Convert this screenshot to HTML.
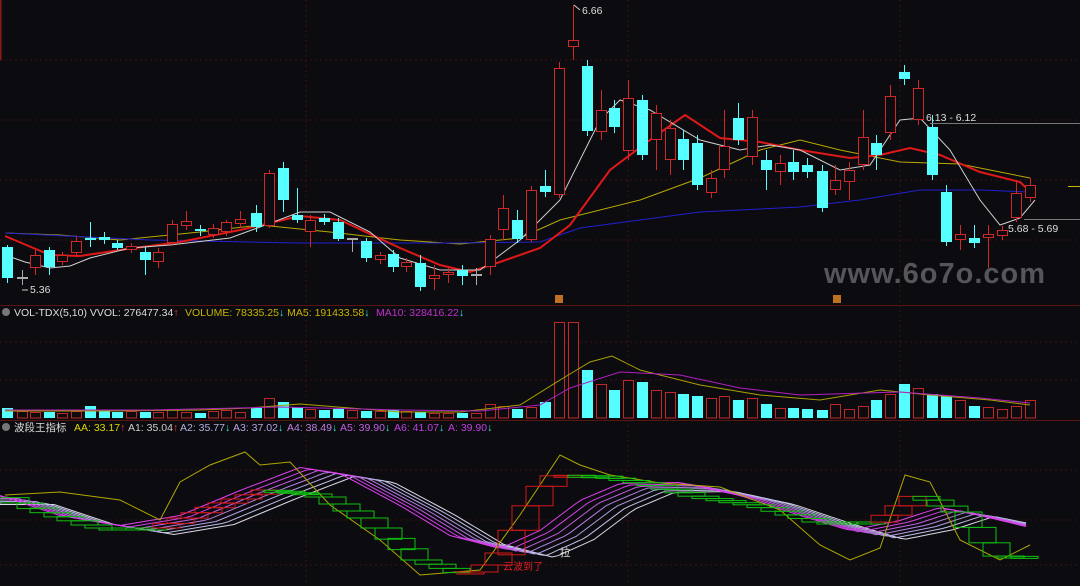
<!DOCTYPE html>
<html><head><meta charset="utf-8"><style>
html,body{margin:0;padding:0;background:#0c0c10;width:1080px;height:586px;overflow:hidden}
svg{display:block}
text{font-family:"Liberation Sans","Noto Sans CJK SC",sans-serif}
</style></head><body>
<svg id="s" width="1080" height="586" xmlns="http://www.w3.org/2000/svg">
<rect width="1080" height="586" fill="#0c0c10"/>
<g stroke="#3a1010" stroke-dasharray="2,3" stroke-width="1">
<line x1="0" y1="60" x2="1080" y2="60"/><line x1="0" y1="120" x2="1080" y2="120"/><line x1="0" y1="180" x2="1080" y2="180"/><line x1="0" y1="240" x2="1080" y2="240"/>
<line x1="0" y1="342" x2="1080" y2="342"/><line x1="0" y1="380" x2="1080" y2="380"/>
<line x1="0" y1="470" x2="1080" y2="470"/><line x1="0" y1="520" x2="1080" y2="520"/><line x1="0" y1="565" x2="1080" y2="565"/>
<line x1="306" y1="0" x2="306" y2="586"/><line x1="628" y1="0" x2="628" y2="586"/><line x1="900" y1="0" x2="900" y2="586"/>
</g>
<line x1="0" y1="305.5" x2="1080" y2="305.5" stroke="#5a1414"/>
<line x1="0" y1="420.5" x2="1080" y2="420.5" stroke="#5a1414"/>
<line x1="0.5" y1="0" x2="0.5" y2="60" stroke="#8a1a1a" stroke-width="2"/>
<g id="c"></g>
<text x="824" y="283" font-size="29" fill="#55555a" font-weight="bold" letter-spacing="1">www.6o7o.com</text>
<g font-size="10.5">
<circle cx="6" cy="312" r="4" fill="#777"/>
<text x="14" y="316" fill="#ddd">VOL-TDX(5,10) VVOL: 276477.34<tspan fill="#f33">↑</tspan></text>
<text x="185" y="316" fill="#c8b400">VOLUME: 78335.25<tspan fill="#3ee">↓</tspan> MA5: 191433.58<tspan fill="#3ee">↓</tspan></text>
<text x="376" y="316" fill="#c030d0">MA10: 328416.22<tspan fill="#3ee">↓</tspan></text>
<circle cx="6" cy="427" r="4" fill="#777"/>
<text x="14" y="431" fill="#ddd">波段王指标</text>
<text x="74" y="431" fill="#d8d800">AA: 33.17<tspan fill="#f33">↑</tspan></text>
<text x="128" y="431" fill="#ccc">A1: 35.04<tspan fill="#f33">↑</tspan></text>
<text x="180" y="431" fill="#b0b0e0">A2: 35.77<tspan fill="#3ee">↓</tspan></text>
<text x="233" y="431" fill="#b8a0e0">A3: 37.02<tspan fill="#3ee">↓</tspan></text>
<text x="287" y="431" fill="#c080e0">A4: 38.49<tspan fill="#3ee">↓</tspan></text>
<text x="340" y="431" fill="#c060e0">A5: 39.90<tspan fill="#3ee">↓</tspan></text>
<text x="394" y="431" fill="#c040e0">A6: 41.07<tspan fill="#3ee">↓</tspan></text>
<text x="448" y="431" fill="#c040e0">A: 39.90<tspan fill="#3ee">↓</tspan></text>
</g>
<g font-size="10.5" fill="#ddd">
<text x="582" y="14">6.66</text>
<polyline points="574,5 580,10" stroke="#ccc" fill="none"/>
<text x="30" y="293">5.36</text>
<polyline points="22,290 28,290" stroke="#ccc"/>
<text x="926" y="121">6.13 - 6.12</text>
<line x1="930" y1="123.5" x2="1080" y2="123.5" stroke="#777"/>
<text x="1008" y="232">5.68 - 5.69</text>
<line x1="1024" y1="219.5" x2="1080" y2="219.5" stroke="#777"/>
<line x1="1068" y1="186.5" x2="1080" y2="186.5" stroke="#c8b400"/>
<text x="560" y="556" fill="#ddd">拉</text>
<text x="503" y="570" fill="#e02020" font-size="10">云波到了</text>
</g>
<rect x="555" y="295" width="8" height="8" fill="#c07020"/>
<rect x="833" y="295" width="8" height="8" fill="#c07020"/>
</svg>
<script>
var C=[[7,'c',247,278,245,283],[22,'w',278,279,270,285],[35,'r',255,268,250,275],[49,'c',250,267,247,275],[62,'r',255,262,252,265],[76,'r',241,253,236,257],[90,'c',238,240,222,247],[104,'c',237,240,232,244],[117,'c',243,248,240,250],[131,'r',246,250,243,253],[145,'c',252,260,247,275],[158,'r',252,262,248,268],[172,'r',224,243,220,246],[186,'r',221,226,211,230],[200,'c',229,231,225,236],[213,'r',228,235,224,238],[226,'r',222,232,220,236],[240,'r',219,224,211,228],[256,'c',213,227,205,232],[269,'r',173,226,170,228],[283,'c',168,200,162,212],[297,'c',215,220,188,223],[310,'r',220,232,215,247],[324,'c',218,222,214,225],[338,'c',222,239,218,241],[352,'w',239,241,238,252],[366,'c',241,258,238,262],[380,'r',255,260,252,264],[393,'c',254,267,250,272],[406,'r',262,267,258,272],[420,'c',263,287,255,291],[434,'r',275,279,265,290],[448,'r',272,275,268,283],[462,'c',270,276,265,285],[476,'w',275,276,268,285],[490,'r',239,267,235,275],[503,'r',208,230,195,240],[517,'c',220,239,210,243],[531,'r',190,240,186,242],[545,'c',186,192,170,197],[559,'r',68,195,62,198],[573,'r',40,47,5,60],[587,'c',66,131,60,136],[601,'r',110,132,90,140],[614,'c',108,127,100,133],[628,'r',98,151,80,160],[642,'c',100,155,95,160],[656,'r',113,140,105,170],[670,'r',128,160,120,175],[683,'c',139,160,130,170],[697,'c',143,185,135,190],[711,'r',178,193,170,198],[724,'r',146,170,110,178],[738,'c',118,140,103,145],[752,'r',117,157,110,165],[766,'c',160,170,150,190],[780,'r',163,172,155,185],[793,'c',162,172,150,180],[807,'c',165,172,158,178],[822,'c',171,208,165,212],[835,'r',180,190,165,195],[849,'r',170,182,162,200],[863,'r',137,165,110,170],[876,'c',143,155,135,170],[890,'r',96,133,85,140],[904,'c',72,79,65,85],[918,'r',88,120,80,125],[932,'c',127,175,115,180],[946,'c',192,242,185,246],[960,'r',234,240,225,250],[974,'c',238,243,225,248],[988,'r',234,238,225,268],[1002,'r',230,236,226,240],[1016,'r',193,218,180,222],[1030,'r',185,198,178,202]];
var g=document.getElementById('c'),h='';
function pl(p,col,w){h+='<polyline fill="none" stroke="'+col+'" stroke-width="'+(w||1)+'" points="'+p+'"/>';}
function interp(pts,x){if(x<=pts[0][0])return pts[0][1];for(var i=0;i<pts.length-1;i++){if(x>=pts[i][0]&&x<=pts[i+1][0]){var t=(x-pts[i][0])/(pts[i+1][0]-pts[i][0]);return pts[i][1]+t*(pts[i+1][1]-pts[i][1]);}}return pts[pts.length-1][1];}
function P(a){return a.map(function(p){return p.join(',')}).join(' ');}
pl(P([[5,233],[60,235],[120,240],[200,232],[260,225],[330,232],[400,240],[460,244],[520,238],[560,220],[640,200],[700,178],[760,150],[800,140],[840,150],[900,162],[960,164],[1000,172],[1030,178]]),'#b8a800');
pl(P([[5,233],[150,240],[300,243],[450,243],[540,242],[580,228],[700,212],[800,207],[860,200],[920,190],[980,190],[1030,192]]),'#2020d0');
pl(P([[5,236],[50,255],[80,256],[120,250],[180,242],[240,230],[300,216],[340,220],[400,248],[440,265],[470,272],[500,262],[540,248],[570,225],[610,170],[650,140],[685,115],[720,138],[760,142],[800,150],[850,158],[880,155],[910,148],[940,155],[980,172],[1020,182],[1035,196]]),'#e01818',2);
pl(P([[5,255],[25,262],[50,268],[70,266],[90,258],[130,248],[170,245],[230,238],[260,227],[300,212],[330,212],[370,232],[400,258],[440,270],[480,270],[520,240],[560,200],[600,120],[620,100],[650,110],[700,140],[740,150],[770,145],[800,150],[840,170],[870,165],[900,120],[920,118],[950,150],[980,200],[1000,225],[1020,218],[1035,200]]),'#d0d0d0');
C.forEach(function(c){var x=c[0],col=c[1]=='c'?'#55ffff':c[1]=='r'?'#d02828':'#aaaaaa';
h+='<line x1="'+(x+.5)+'" y1="'+c[4]+'" x2="'+(x+.5)+'" y2="'+c[5]+'" stroke="'+col+'"/>';
var hh=Math.max(2,c[3]-c[2]);
if(c[1]=='c')h+='<rect x="'+(x-5)+'" y="'+c[2]+'" width="11" height="'+hh+'" fill="#55ffff"/>';
else if(c[1]=='r')h+='<rect x="'+(x-4.5)+'" y="'+(c[2]+.5)+'" width="10" height="'+(hh-1)+'" fill="#0c0c10" stroke="#d02828"/>';
else h+='<line x1="'+(x-5)+'" y1="'+c[2]+'" x2="'+(x+6)+'" y2="'+c[2]+'" stroke="#aaa" stroke-width="2"/>';});
var V=[10,7,6,6,5,7,12,7,6,7,6,6,9,6,5,7,8,6,10,20,16,11,9,8,9,8,7,7,8,7,6,5,5,5,5,14,12,9,11,16,96,96,48,34,28,38,36,28,26,24,22,20,22,18,20,14,10,10,9,8,14,9,12,18,24,34,30,24,22,18,12,11,9,12,18,10];
C.forEach(function(c,i){var x=c[0],v=V[i]||8,col=c[1]=='c';
if(col)h+='<rect x="'+(x-5)+'" y="'+(418-v)+'" width="11" height="'+v+'" fill="#55ffff"/>';
else h+='<rect x="'+(x-4.5)+'" y="'+(418.5-v)+'" width="10" height="'+(v-0.5)+'" fill="#0c0c10" stroke="#c02828"/>';});
pl(P([[5,411],[100,411],[200,410],[250,408],[300,404],[350,408],[400,412],[460,412],[520,405],[560,380],[590,362],[612,356],[640,370],[700,385],[760,395],[820,400],[880,390],[930,395],[990,400],[1030,405]]),'#a8a000');
pl(P([[5,410],[150,410],[280,407],[400,410],[480,411],[540,405],[570,388],[620,372],[680,375],[740,388],[800,395],[900,392],[980,398],[1030,403]]),'#b020c0');
var base=[[0,500],[60,520],[120,530],[180,520],[240,495],[300,472],[340,478],[400,510],[450,540],[500,553],[540,535],[580,505],[620,488],[680,487],[740,500],[800,520],[850,535],[900,525],[940,512],[980,520],[1030,532]];
var fc=['#e040f0','#d040e8','#c060e0','#b080e0','#b0a0e0','#c0c0e8','#d8d8e8'];
for(var k=6;k>=0;k--){var pts=[];for(var x=0;x<=1030;x+=6){var y=interp(base,x-k*9);pts.push([x,(y+(k-3)*1.5).toFixed(1)]);}pl(P(pts),fc[k]);}
var yl=[[5,495],[60,492],[120,500],[160,520],[180,482],[210,465],[245,452],[260,465],[290,462],[330,505],[380,540],[420,575],[480,570],[520,515],[560,455],[580,465],[610,475],[660,483],[720,487],[780,510],[820,545],[850,560],[880,548],[905,475],[930,482],[960,540],[1000,560],[1030,545]];
pl(P(yl),'#b0a800');
var bx=[[0,495],[40,510],[100,528],[160,528],[220,505],[270,490],[320,495],[370,520],[420,560],[470,575],[500,560],[540,490],[560,475],[600,476],[650,484],[700,497],[760,506],[820,522],[880,522],[920,495],[960,512],[1000,556],[1040,557]];
for(var i=0;i<C.length-1;i++){var x=C[i][0]-5,a=interp(bx,C[i][0]),b=interp(bx,C[i][0]+14);var up=b<a;
h+='<rect x="'+x+'" y="'+Math.min(a,b).toFixed(1)+'" width="27" height="'+Math.max(2,Math.abs(a-b)).toFixed(1)+'" fill="none" stroke="'+(up?'#d01818':'#10c010')+'"/>';}
g.innerHTML=h;
</script>
</body></html>
